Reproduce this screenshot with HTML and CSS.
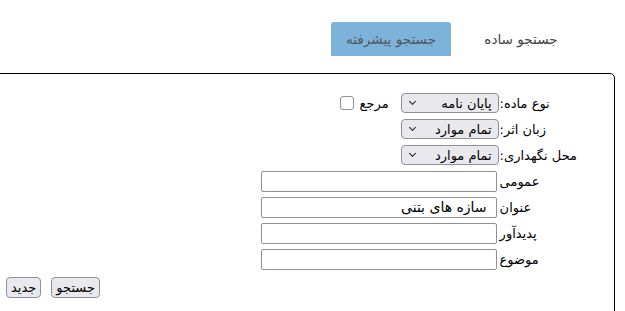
FILE: index.html
```html
<!DOCTYPE html>
<html lang="fa" dir="rtl">
<head>
<meta charset="utf-8">
<title>جستجو پیشرفته</title>
<link rel="stylesheet" href="styles.css">
</head>
<body>
<div class="page">
  <div class="tabs">
    <div class="tab">جستجو ساده</div>
    <div class="tab active">جستجو پیشرفته</div>
  </div>
  <div class="panel">
    <div class="form">
      <label class="lbl">نوع ماده:</label>
      <div class="ctl">
        <span class="sel"><select><option>پایان نامه</option></select></span>
        <span class="ref">مرجع</span>
        <input type="checkbox" class="chk">
      </div>
      <label class="lbl">زبان اثر:</label>
      <div class="ctl">
        <span class="sel"><select><option>تمام موارد</option></select></span>
      </div>
      <label class="lbl">محل نگهداری:</label>
      <div class="ctl">
        <span class="sel"><select><option>تمام موارد</option></select></span>
      </div>
      <label class="lbl">عمومی</label>
      <div class="ctl"><input type="text" class="txt"></div>
      <label class="lbl">عنوان</label>
      <div class="ctl"><input type="text" class="txt" value="سازه های بتنی"></div>
      <label class="lbl">پدیدآور</label>
      <div class="ctl"><input type="text" class="txt"></div>
      <label class="lbl">موضوع</label>
      <div class="ctl"><input type="text" class="txt"></div>
    </div>
    <div class="actions">
      <button class="btn">جستجو</button>
      <button class="btn">جدید</button>
    </div>
  </div>
</div>
</body>
</html>
```

FILE: styles.css
```css
html, body {
  margin: 0;
  padding: 0;
  background: #fff;
  overflow: hidden;
}
body {
  font-family: "DejaVu Sans", sans-serif;
  font-size: 13px;
  color: #000;
}
.page {
  width: 625px;
}
.tabs {
  display: flex;
  gap: 10px;
  padding-top: 22px;
  padding-right: 44px;
  margin-bottom: 17px;
}
.tab {
  width: 120px;
  height: 34px;
  display: flex;
  align-items: center;
  justify-content: center;
  color: #444;
  font-size: 13.6px;
  border-radius: 3px 3px 0 0;
}
.tab.active {
  background: #7db3db;
  color: #4f5860;
}
.panel {
  border: 1px solid #000;
  border-top-right-radius: 5px;
  margin-left: -10px;
  margin-right: 10px;
  padding: 16px 37px 40px 15px;
}
.form {
  display: grid;
  grid-template-columns: auto auto;
  grid-auto-rows: 26px;
  justify-content: start;
  align-items: center;
  column-gap: 1px;
}
.lbl {
  text-align: left;
  white-space: nowrap;
}
.ctl {
  display: flex;
  align-items: center;
}
.sel {
  position: relative;
  display: inline-block;
  height: 20px;
}
.sel select {
  appearance: none;
  -webkit-appearance: none;
  width: 98px;
  height: 20px;
  box-sizing: border-box;
  margin: 0;
  padding: 0 6px 0 20px;
  font-family: "DejaVu Sans", sans-serif;
  font-size: 13px;
  color: #000;
  background: #e9e9ed;
  border: 1px solid #8f8f9d;
  border-radius: 4px;
  text-align: right;
}
.sel::after {
  content: "";
  position: absolute;
  left: 9px;
  top: 6px;
  width: 4px;
  height: 4px;
  border-right: 1.3px solid #222;
  border-bottom: 1.3px solid #222;
  transform: rotate(45deg);
  pointer-events: none;
}
.ref {
  margin-right: 12px;
}
.chk {
  appearance: none;
  -webkit-appearance: none;
  width: 14px;
  height: 14px;
  box-sizing: border-box;
  margin: 0 6px 0 0;
  border: 1px solid #8f8f9d;
  border-radius: 3px;
  background: #fff;
}
.txt {
  width: 236px;
  height: 21px;
  box-sizing: border-box;
  margin: 0 2px 0 0;
  padding: 0 9px 0 4px;
  font-family: "DejaVu Sans", sans-serif;
  font-size: 14px;
  color: #000;
  border: 1px solid #8f8f9d;
  border-radius: 2px;
  background: #fff;
}
.actions {
  display: flex;
  justify-content: flex-end;
  gap: 10px;
  margin-top: 5px;
}
.btn {
  height: 21px;
  box-sizing: border-box;
  margin: 0;
  padding: 0 4px;
  font-family: "DejaVu Sans", sans-serif;
  font-size: 13px;
  color: #000;
  background: #e9e9ed;
  border: 1px solid #8f8f9d;
  border-radius: 4px;
}
```
